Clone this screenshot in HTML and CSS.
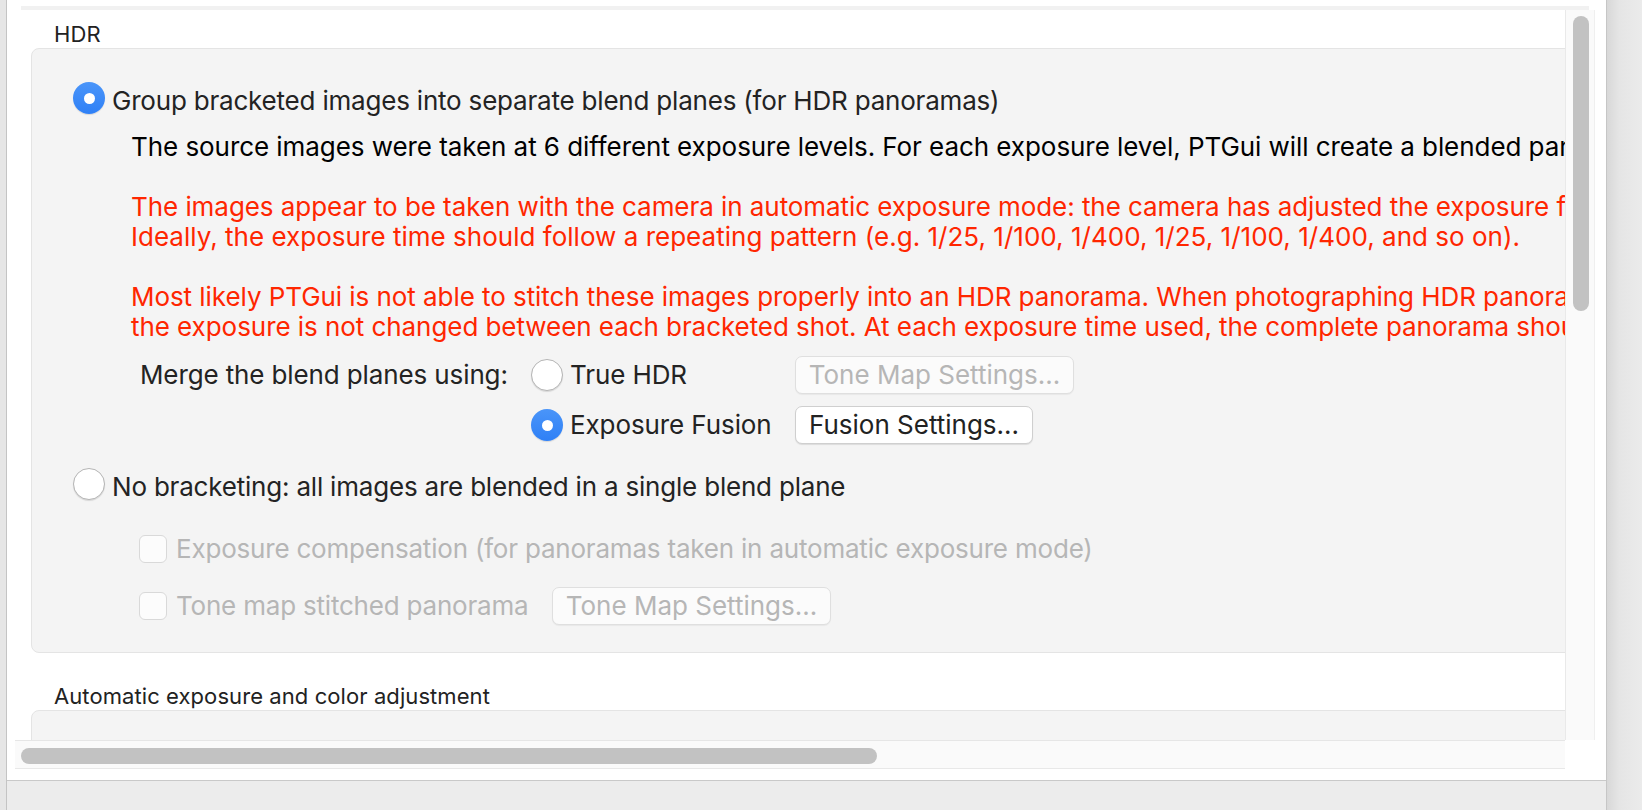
FILE: index.html
```html
<!DOCTYPE html>
<html>
<head>
<meta charset="utf-8">
<title>PTGui HDR</title>
<link rel="stylesheet" href="styles.css">
</head>
<body>
<div class="screen">
  <div class="edge-left"></div>
  <div class="window">
    <div class="topstrip"></div>
    <div class="scrollarea">
      <div class="viewport">
        <div class="content">
          <div class="group-title">HDR</div>
          <div class="panel hdr-panel">
            <div class="opt-row">
              <span class="radio on"></span>
              <span class="opt-label">Group bracketed images into separate blend planes (for HDR panoramas)</span>
            </div>
            <div class="info">
              <div class="line black">The source images were taken at 6 different exposure levels. For each exposure level, PTGui will create a blended panorama.</div>
              <div class="line blank"></div>
              <div class="line red">The images appear to be taken with the camera in automatic exposure mode: the camera has adjusted the exposure for</div>
              <div class="line red numeric">Ideally, the exposure time should follow a repeating pattern (e.g. 1/25, 1/100, 1/400, 1/25, 1/100, 1/400, and so on).</div>
              <div class="line blank"></div>
              <div class="line red">Most likely PTGui is not able to stitch these images properly into an HDR panorama. When photographing HDR panoramas</div>
              <div class="line red">the exposure is not changed between each bracketed shot. At each exposure time used, the complete panorama should</div>
            </div>
            <div class="merge">
              <div class="merge-label">Merge the blend planes using:</div>
              <div class="merge-opt"><span class="radio"></span><span class="opt-text">True HDR</span></div>
              <div class="btn disabled wide">Tone Map Settings...</div>
              <div class="merge-spacer"></div>
              <div class="merge-opt"><span class="radio on"></span><span class="opt-text">Exposure Fusion</span></div>
              <div class="btn fusion">Fusion Settings...</div>
            </div>
            <div class="opt-row nobracket">
              <span class="radio"></span>
              <span class="opt-label">No bracketing: all images are blended in a single blend plane</span>
            </div>
            <div class="check-row first">
              <span class="check"></span>
              <span class="check-label">Exposure compensation (for panoramas taken in automatic exposure mode)</span>
            </div>
            <div class="check-row second">
              <span class="check"></span>
              <span class="check-label fixed">Tone map stitched panorama</span>
              <div class="btn disabled wide">Tone Map Settings...</div>
            </div>
          </div>
          <div class="group-title lower">Automatic exposure and color adjustment</div>
          <div class="panel auto-panel"></div>
        </div>
        <div class="vscroll"><div class="vthumb"></div></div>
      </div>
      <div class="hscroll-row">
        <div class="hscroll"><div class="hthumb"></div></div>
      </div>
    </div>
    <div class="bottombar"></div>
  </div>
  <div class="edge-right"></div>
</div>
</body>
</html>
```
FILE: styles.css
```css
* { box-sizing: border-box; }
html, body { margin: 0; padding: 0; }
body {
  width: 1642px;
  height: 810px;
  overflow: hidden;
  background: #ececec;
  font-family: Inter, "Noto Sans", sans-serif;
  color: #222;
}
.screen {
  display: flex;
  width: 1642px;
  height: 810px;
}
.edge-left {
  width: 7px;
  flex: none;
  background: #e6e6e6;
  border-right: 1px solid #c4c4c4;
}
.window {
  width: 1600px;
  flex: none;
  display: flex;
  flex-direction: column;
  background: #fff;
  border-right: 1px solid #c6c6c6;
}
.topstrip {
  margin: 6px 0 0 14px;
  width: 1568px;
  height: 4px;
  background: #f1f1f1;
}
.scrollarea {
  margin-left: 8px;
  width: 1580px;
}
.viewport {
  display: flex;
  height: 730px;
}
.content {
  width: 1550px;
  flex: none;
  overflow: hidden;
  padding-top: 11px;
}
.group-title {
  margin-left: 39px;
  font-size: 22px;
  line-height: 26px;
  height: 26px;
  margin-bottom: 1px;
  color: #222;
  white-space: nowrap;
  letter-spacing: 0.08px;
}
.group-title.lower { margin-top: 30px; }
.panel {
  margin-left: 16px;
  width: 1700px;
  background: #f4f4f4;
  border: 1px solid #e4e4e4;
  border-radius: 8px;
}
.hdr-panel {
  padding: 33px 0 26px 41px;
}
.auto-panel { height: 120px; }

.opt-row {
  display: flex;
  align-items: flex-start;
  height: 34px;
}
.opt-label {
  margin-left: 7px;
  margin-top: 4px;
  font-size: 26px;
  line-height: 30px;
  white-space: nowrap;
  color: #232323;
  letter-spacing: -0.2px;
}
.radio {
  width: 32px;
  height: 32px;
  flex: none;
  border-radius: 50%;
  background: #fff;
  border: 1px solid #b5b5b5;
  box-shadow: 0 1px 1px rgba(0,0,0,0.12);
  display: flex;
  align-items: center;
  justify-content: center;
}
.radio.on {
  border: none;
  background: linear-gradient(#4a95f9, #2f80f6);
  box-shadow: 0 1px 1px rgba(0,0,0,0.12);
}
.radio.on::after {
  content: "";
  width: 11px;
  height: 11px;
  border-radius: 50%;
  background: #fff;
}
.info {
  margin-top: 16px;
  padding-left: 58px;
  font-size: 26px;
  line-height: 30px;
  letter-spacing: -0.06px;
}
.line {
  height: 30px;
  white-space: nowrap;
}
.line.black { color: #000; }
.line.red { color: #ff2600; }
.line.numeric { letter-spacing: 0.02px; }
.merge {
  margin-top: 13px;
  margin-left: 67px;
  display: grid;
  grid-template-columns: 391px 264px auto;
  grid-auto-rows: 40px;
  row-gap: 10px;
  align-items: center;
  font-size: 26px;
  line-height: 30px;
}
.merge-label { white-space: nowrap; color: #232323; letter-spacing: -0.12px; }
.merge-opt {
  display: flex;
  align-items: center;
}
.opt-text {
  margin-left: 7px;
  white-space: nowrap;
  color: #232323;
  letter-spacing: -0.1px;
}
.btn {
  height: 38px;
  border-radius: 7px;
  background: #fff;
  border: 1px solid #cfcfcf;
  box-shadow: 0 1px 1px rgba(0,0,0,0.10);
  font-size: 26px;
  line-height: 36px;
  text-align: center;
  white-space: nowrap;
  color: #222;
  justify-self: start;
}
.btn.wide { width: 279px; }
.btn.fusion { width: 238px; }
.btn.disabled {
  background: #fbfbfb;
  border-color: #dfdfdf;
  box-shadow: 0 1px 1px rgba(0,0,0,0.05);
  color: #b6b6b6;
}
.nobracket { margin-top: 23px; }
.check-row {
  display: flex;
  align-items: center;
  margin-left: 66px;
  font-size: 26px;
  line-height: 30px;
}
.check-row.first { margin-top: 32px; height: 30px; }
.check-row.second { margin-top: 22px; height: 40px; }
.check {
  width: 28px;
  height: 28px;
  flex: none;
  border-radius: 6px;
  background: #fcfcfc;
  border: 1px solid #d9d9d9;
}
.check-label {
  margin-left: 9px;
  white-space: nowrap;
  color: #b6b6b6;
  letter-spacing: -0.2px;
}
.check-label.fixed { width: 376px; flex: none; }

.vscroll {
  width: 30px;
  flex: none;
  background: #fafafa;
  border-left: 1px solid #e9e9e9;
  border-right: 1px solid #efefef;
  padding: 6px 0 0 7px;
}
.vthumb {
  width: 16px;
  height: 295px;
  border-radius: 8px;
  background: #c2c2c2;
}
.hscroll-row {
  display: flex;
  height: 29px;
}
.hscroll {
  width: 1550px;
  height: 29px;
  background: #fafafa;
  border-top: 1px solid #e6e6e6;
  border-bottom: 1px solid #e8e8e8;
  padding: 7px 0 0 6px;
}
.hthumb {
  width: 856px;
  height: 16px;
  border-radius: 8px;
  background: #c2c2c2;
}
.bottombar {
  margin-top: 11px;
  flex: 1;
  background: #ececec;
  border-top: 1px solid #c9c9c9;
}
.edge-right {
  flex: 1;
  background: linear-gradient(to right, #d8d8d8, #e5e5e5 35%, #ebebeb);
}
```
